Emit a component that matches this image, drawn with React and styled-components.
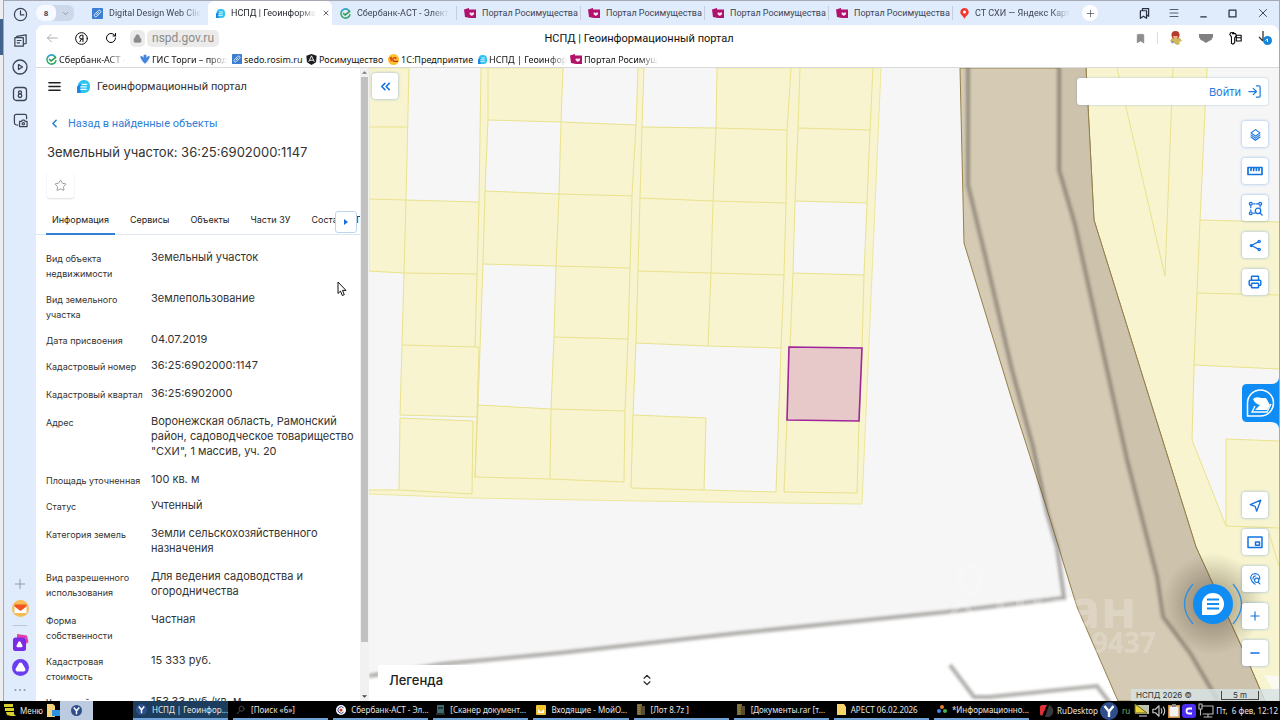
import React from "react";
import styled, { createGlobalStyle } from "styled-components";
import {
  Bookmark,
  ChevronDown,
  ChevronLeft,
  ChevronsLeft,
  ChevronsUpDown,
  Lock,
  LogIn,
  Menu,
  Minus,
  Plus,
  Printer,
  RotateCw,
  Star,
  X,
} from "lucide-react";

const GlobalStyle = createGlobalStyle`
  * {
    box-sizing: border-box;
  }
  body {
    margin: 0;
    overflow: hidden;
    font-family: Roboto, sans-serif;
  }
  button {
    border: none;
    background: none;
    padding: 0;
    margin: 0;
    font: inherit;
    color: inherit;
    cursor: pointer;
  }
  a {
    color: inherit;
    text-decoration: none;
  }
  svg {
    display: block;
    flex: none;
  }
`;

/* ---------- window ---------- */

const Desktop = styled.div`
  display: grid;
  grid-template-columns: minmax(0, 1fr);
  grid-template-rows: minmax(0, 1fr) 19px;
  height: 100vh;
  background: linear-gradient(#eceef0 19px, #44638c 19px, #44638c 55px, #eceef0 55px);
`;

const BrowserWindow = styled.div`
  display: grid;
  grid-template-columns: 32px minmax(0, 1fr);
  margin-left: 3px;
  border: 1px solid #a4a9b3;
  border-bottom: none;
  background: #e0ebfc;
  min-height: 0;
`;

const SideRail = styled.nav`
  display: flex;
  flex-direction: column;
  justify-content: space-between;
  align-items: center;
  padding: 6px 0 5px;
  color: #3b4354;
`;

const RailGroup = styled.div`
  display: flex;
  flex-direction: column;
  align-items: center;
  gap: ${(props) => props.$gap}px;
`;

const RailDivider = styled.div`
  width: 14px;
  height: 1px;
  background: #bcc5d5;
`;

const RailDots = styled.div`
  color: #8c95a5;
`;

const Page = styled.div`
  display: flex;
  flex-direction: column;
  min-width: 0;
  min-height: 0;
`;

/* ---------- tab strip ---------- */

const TabStrip = styled.div`
  display: flex;
  align-items: center;
  height: 24px;
  color: #3d4557;
  font-size: 9px;
`;

const TabGroup = styled.div`
  display: flex;
  align-items: center;
  width: 38px;
  height: 16px;
  margin: 0 10px 0 0;
  border-radius: 6px;
  background: #cdd8ea;
  overflow: hidden;
`;

const TabCount = styled.button`
  width: 20px;
  height: 16px;
  border-radius: 6px;
  background: #f6f9ff;
  font-size: 8px;
  font-weight: 700;
`;

const TabGroupToggle = styled.button`
  display: flex;
  justify-content: center;
  width: 18px;
  color: #7d889c;
`;

const Tab = styled.button`
  display: flex;
  align-items: center;
  gap: 6px;
  flex: 0 1 124px;
  min-width: 0;
  height: ${(props) => (props.$active ? "24px" : "14px")};
  padding: 0 ${(props) => (props.$active ? "7px" : "1px")} 0 7px;
  border-radius: ${(props) => (props.$active ? "6px 6px 0 0" : "0")};
  border-left: 1px solid ${(props) => (props.$divider ? "#c3cede" : "transparent")};
  background: ${(props) => (props.$active ? "#fff" : "transparent")};
  color: ${(props) => (props.$active ? "#1c1f26" : "#3d4557")};

  svg:nth-of-type(2) {
    margin-left: auto;
  }
`;

const FadeText = styled.span`
  white-space: nowrap;
  mask-image: ${(props) =>
    props.$fade ? "linear-gradient(to right, #000 calc(100% - 18px), transparent)" : "none"};
`;

const NewTab = styled.button`
  display: flex;
  align-items: center;
  justify-content: center;
  width: 16px;
  height: 16px;
  margin-left: 6px;
  border-radius: 50%;
  background: #fff;
`;

const WindowButtons = styled.div`
  display: flex;
  align-items: center;
  gap: 18px;
  margin-left: auto;
  padding-right: 9px;
  color: #2a3040;
`;

/* ---------- toolbar ---------- */

const Toolbar = styled.div`
  display: grid;
  grid-template-columns: minmax(0, 1fr) auto minmax(0, 1fr);
  align-items: center;
  height: 26px;
  padding: 0 7px 0 10px;
  background: #fff;
  border-radius: 8px 8px 0 0;
`;

const ToolbarSide = styled.div`
  display: flex;
  align-items: center;
  gap: ${(props) => props.$gap}px;
  justify-content: ${(props) => (props.$end ? "flex-end" : "flex-start")};
`;

const Address = styled.div`
  display: flex;
  align-items: center;
  gap: 2px;
  margin-left: -4px;
  color: #8a8a8a;
  font-size: 12px;
`;

const AddressPart = styled.button`
  display: flex;
  align-items: center;
  height: 17px;
  padding: 0 ${(props) => props.$pad}px;
  border-radius: 5px;
  background: #ebebeb;
`;

const PageTitle = styled.div`
  padding-right: 40px;
  font-size: 11px;
  color: #111;
  white-space: nowrap;
`;

const ToolbarDivider = styled.div`
  width: 1px;
  height: 12px;
  background: #ddd;
`;

const Bookmarks = styled.div`
  display: flex;
  gap: 9px;
  align-items: center;
  height: 17px;
  padding: 0 10px;
  border-bottom: 1px solid #d9d9d9;
  background: #fff;
  color: #111;
  font-family: "Noto Sans", sans-serif;
  font-size: 9px;
`;

const BookmarkLink = styled.a`
  display: flex;
  align-items: center;
  gap: 2px;
  width: ${(props) => props.$width}px;
`;

/* ---------- site ---------- */

const Site = styled.main`
  display: grid;
  grid-template-columns: 333px minmax(0, 1fr);
  flex: 1;
  min-height: 0;
`;

const PanelFrame = styled.div`
  display: grid;
  grid-template-columns: minmax(0, 1fr) 9px;
  min-height: 0;
  background: #fff;
`;

const Panel = styled.section`
  min-height: 0;
  overflow: hidden;
  background: #fff;
  color: #333;
  font-family: Inter, sans-serif;
`;

const ScrollTrack = styled.div`
  display: flex;
  flex-direction: column;
  align-items: center;
  justify-content: space-between;
  padding: 3px 0;
  background: #f1f1f1;
`;

const ScrollThumb = styled.div`
  width: 7px;
  flex: 0 1 565px;
  margin: 3px 0 auto;
  background: #c1c1c1;
`;

const SiteHeader = styled.header`
  display: flex;
  align-items: center;
  height: 37px;
  padding-left: 11px;
  font-family: Roboto, sans-serif;
  font-size: 11px;
`;

const BurgerButton = styled.button`
  margin-right: 15px;
  color: #222;
`;

const SiteName = styled.a`
  display: flex;
  align-items: center;
  gap: 7px;
`;

const BackLink = styled.a`
  display: flex;
  align-items: center;
  gap: 7px;
  height: 37px;
  padding-left: 12px;
  color: #2f80d8;
  font-family: Roboto, sans-serif;
  font-size: 11px;
`;

const ObjectTitle = styled.h1`
  margin: 0;
  padding-left: 11px;
  font-size: 13px;
  line-height: 20px;
  font-weight: 400;
`;

const StarButton = styled.button`
  display: flex;
  align-items: center;
  justify-content: center;
  width: 27px;
  height: 26px;
  margin: 10px 0 9px 11px;
  border-radius: 3px;
  box-shadow: 0 1px 2px rgba(0, 0, 0, 0.14);
  color: #999;
`;

const SectionTabs = styled.div`
  display: flex;
  align-items: center;
  position: relative;
  height: 28px;
  padding-left: 10px;
  border-bottom: 1px solid #dde5ee;
  font-size: 9px;
`;

const SectionTab = styled.button`
  flex: none;
  height: 28px;
  margin-right: 9px;
  padding: 0 6px;
  border-bottom: 2px solid ${(props) => (props.$active ? "#2f80d8" : "transparent")};
  color: #222;
`;

const TabsScroll = styled.button`
  position: absolute;
  right: 3px;
  top: 4px;
  display: flex;
  align-items: center;
  justify-content: center;
  width: 22px;
  height: 22px;
  border: 1px solid #bcd6f2;
  border-radius: 3px;
  background: #fff;
`;

const Details = styled.dl`
  margin: 0;
  padding: 15px 6px 0 10px;
`;

const DetailRow = styled.div`
  display: grid;
  grid-template-columns: 105px minmax(0, 1fr);
  padding-bottom: ${(props) => (props.$tight ? "11px" : "13px")};
`;

const DetailLabel = styled.dt`
  margin-bottom: -3px;
  padding-top: 1px;
  max-width: 98px;
  font-size: 9px;
  line-height: 15px;
`;

const DetailValue = styled.dd`
  margin: 0;
  font-size: 11px;
  line-height: 15px;
`;

/* ---------- map ---------- */

const MapArea = styled.section`
  position: relative;
  min-height: 0;
  overflow: hidden;
  background: #f6f6f6;
  font-family: Inter, sans-serif;
`;

const MapCanvas = styled.svg`
  width: 100%;
  height: 100%;
`;

const MapButton = styled.button`
  display: flex;
  align-items: center;
  justify-content: center;
  width: 26px;
  height: 26px;
  border-radius: 3px;
  background: #fff;
  box-shadow: 0 0 3px rgba(47, 128, 216, 0.55);
  color: #1473e0;
`;

const CollapseSlot = styled.div`
  position: absolute;
  left: 3px;
  top: 5px;
`;

const LoginBar = styled.div`
  position: absolute;
  right: 11px;
  top: 10px;
  display: flex;
  justify-content: flex-end;
  width: 191px;
  height: 27px;
  padding-right: 6px;
  border-radius: 3px;
  background: #fff;
  box-shadow: 0 0 2px rgba(47, 128, 216, 0.5);
  color: #1f7ce0;
  font-size: 11px;
`;

const LoginButton = styled.button`
  display: flex;
  align-items: center;
  gap: 6px;
`;

const MapTools = styled.div`
  position: absolute;
  right: 11px;
  ${(props) => (props.$bottom ? "bottom: 35px;" : "top: 53px;")}
  display: grid;
  gap: 11px;
`;

const AssistWidget = styled.button`
  position: absolute;
  right: 0;
  top: 306px;
`;

const ChatWidget = styled.button`
  position: absolute;
  right: 13px;
  bottom: 44px;
  display: grid;
  place-items: center;
  width: 106px;
  height: 106px;
  border-radius: 50%;
  background: radial-gradient(circle, rgba(90, 80, 60, 0.38) 25%, transparent 68%);
`;

const Legend = styled.button`
  position: absolute;
  left: 9px;
  bottom: 6px;
  display: flex;
  align-items: center;
  justify-content: space-between;
  width: 288px;
  height: 30px;
  padding: 0 12px 0 11px;
  background: #fff;
  color: #222;
  font-size: 13px;
  font-weight: 500;
`;

const Attribution = styled.div`
  position: absolute;
  right: 0;
  bottom: 0;
  display: flex;
  justify-content: space-between;
  align-items: center;
  width: 148px;
  height: 12px;
  padding: 0 20px 0 5px;
  background: rgba(214, 226, 230, 0.8);
  color: #333;
  font-size: 8px;
`;

const ScaleBar = styled.div`
  width: 38px;
  height: 9px;
  border: 1px solid #444;
  border-top: none;
  line-height: 8px;
  text-align: center;
`;

const Pointer = styled.svg`
  position: absolute;
  left: 337px;
  top: 281px;
`;

/* ---------- taskbar ---------- */

const Taskbar = styled.footer`
  display: flex;
  align-items: stretch;
  min-width: 0;
  background: #000;
  color: #e6e6e6;
  font-family: "Noto Sans", sans-serif;
  font-size: 8px;
`;

const StartButton = styled.button`
  display: flex;
  align-items: center;
  gap: 4px;
  width: 46px;
  padding-left: 3px;
`;

const Launcher = styled.button`
  display: flex;
  align-items: center;
  justify-content: center;
  width: ${(props) => props.$width}px;
  background: ${(props) => (props.$lit ? "#bccbe0" : "transparent")};
`;

const TaskList = styled.div`
  display: flex;
  flex: 0 1 896px;
  min-width: 0;
  gap: 5px;
  margin-left: 40px;
`;

const Task = styled.button`
  display: flex;
  align-items: center;
  gap: 5px;
  flex: 1 1 0;
  min-width: 0;
  padding: 0 2px 0 3px;
  border-bottom: 2px solid #6fa3d8;
  background: ${(props) => (props.$active ? "#1c3d5c" : "transparent")};
`;

const TaskName = styled.span`
  white-space: nowrap;
`;

const Tray = styled.div`
  display: flex;
  align-items: center;
  gap: 2px;
  margin-left: auto;
  padding-right: 2px;
  white-space: nowrap;
`;

const InputLang = styled.span`
  margin: 0 2px;
  color: #6fae6f;
`;

/* ---------- small drawings ---------- */

const SberIcon = ({ size = 11 }) => (
  <svg width={size} height={size} viewBox="0 0 12 12" fill="none" strokeWidth="1.7">
    <path d="M10.6 4A5 5 0 1 0 11 6.6" stroke="#35ab6b" />
    <path d="M1.6 3.8A5 5 0 0 1 9.2 2.2" stroke="#3ba7dd" />
    <path d="M3.4 5.6 5.6 7.6 11 3.4" stroke="#2b9c52" />
  </svg>
);

const DocIcon = ({ size = 11 }) => (
  <svg width={size} height={size} viewBox="0 0 12 12">
    <rect width="12" height="12" rx="1" fill="#3c7fd2" />
    <g transform="rotate(45 6 6)" fill="none" stroke="#e8f1ff" strokeWidth="1">
      <rect x="4.4" y="1.6" width="3.2" height="8.8" rx="1.6" />
      <path d="M6 4v4" />
    </g>
  </svg>
);

const NspdIcon = ({ size = 10 }) => (
  <svg width={size} height={size} viewBox="0 0 14 14">
    <path d="M1 14V6a6 6 0 0 1 6-6h1a6 6 0 0 1 6 6v2a6 6 0 0 1-6 6z" fill="#2cc4f0" />
    <path d="M0 14V7l4-3v10z" fill="#1e86e5" />
    <path d="M5 4.6h6M3.5 7.4h7M3.5 10.2h7" stroke="#e4fbff" strokeWidth="1.3" />
  </svg>
);

const PortalIcon = () => (
  <svg width="12" height="11" viewBox="0 0 12 11">
    <path d="M0 1.4 5 0v1.4h7V10H6L1 9z" fill="#b0126c" />
    <path d="M5.6 4.6h1.6l.6.6.6-.6H10v1.6L7.8 8 5.6 6.2z" fill="#fff" opacity=".9" />
  </svg>
);

const PinIcon = () => (
  <svg width="9" height="11" viewBox="0 0 9 11">
    <path d="M4.5 0A4.2 4.2 0 0 1 8.7 4.2C8.7 7 5.4 7.6 4.5 11 3.6 7.6.3 7 .3 4.2A4.2 4.2 0 0 1 4.5 0z" fill="#f0392f" />
    <circle cx="4.5" cy="4.1" r="1.5" fill="#fff" />
  </svg>
);

const EagleIcon = () => (
  <svg width="10" height="10" viewBox="0 0 12 12" fill="#4385dd">
    <path d="M6 12 4.5 10H3L3.6 8 1.8 8 2.4 6.5 1 6 .4 2 3 3 4.4 4.4 4.2 1.4 6 .6 7.8 1.4 7.6 4.4 9 3 11.6 2 11 6 9.6 6.5 10.2 8H8.4L9 10H7.5z" />
  </svg>
);

const ShieldIcon = () => (
  <svg width="11" height="11" viewBox="0 0 12 12">
    <path d="M6 0 11.6 2 11 9 6 12 1 9 .4 2z" fill="#1c1c20" />
    <path d="M3 8.4 6 2l3 6.4M4.2 6.8h3.6" fill="none" stroke="#fff" strokeWidth="1" />
  </svg>
);

const OneCIcon = () => (
  <svg width="11" height="11" viewBox="0 0 12 12">
    <circle cx="6" cy="6" r="6" fill="#fbc02c" />
    <path d="M2 5 3.4 4v4M9 5.2A2 2 0 1 0 7.4 8H11" fill="none" stroke="#d8261c" strokeWidth="1.3" />
  </svg>
);

const YandexMark = ({ size }) => (
  <svg width={size} height={size} viewBox="0 0 18 18">
    <circle cx="9" cy="9" r="9" fill="#2f4f8c" />
    <path d="M4.5 4 9 9.5 13.5 4M9 9.5V15" fill="none" stroke="#fff" strokeWidth="2.4" />
  </svg>
);

const Line = ({ size = 14, width = 1.3, children }) => (
  <svg
    width={size}
    height={size}
    viewBox="0 0 16 16"
    fill="none"
    stroke="currentColor"
    strokeWidth={width}
    strokeLinecap="round"
    strokeLinejoin="round"
  >
    {children}
  </svg>
);

/* ---------- data ---------- */

const browserTabs = [
  { icon: <DocIcon />, name: "Digital Design Web Clie", fade: true },
  { icon: <NspdIcon size={9} />, name: "НСПД | Геоинформа", fade: true, active: true },
  { icon: <SberIcon />, name: "Сбербанк-АСТ - Элект", fade: true },
  { icon: <PortalIcon />, name: "Портал Росимущества", divider: true },
  { icon: <PortalIcon />, name: "Портал Росимущества", divider: true },
  { icon: <PortalIcon />, name: "Портал Росимущества", divider: true },
  { icon: <PortalIcon />, name: "Портал Росимущества", divider: true },
  { icon: <PinIcon />, name: "СТ СХИ — Яндекс Карт", fade: true, divider: true },
];

const bookmarks = [
  { icon: <SberIcon />, name: "Сбербанк-АСТ - ", width: 85, fade: true },
  { icon: <EagleIcon />, name: "ГИС Торги – прод", width: 83, fade: true },
  { icon: <DocIcon size={10} />, name: "sedo.rosim.ru", width: 65 },
  { icon: <ShieldIcon />, name: "Росимущество", width: 73 },
  { icon: <OneCIcon />, name: "1С:Предприятие", width: 81 },
  { icon: <NspdIcon size={9} />, name: "НСПД | Геоинфор", width: 83, fade: true },
  { icon: <PortalIcon />, name: "Портал Росимущ", width: 86, fade: true },
];

const details = [
  ["Вид объекта недвижимости", "Земельный участок"],
  ["Вид земельного участка", "Землепользование"],
  ["Дата присвоения", "04.07.2019", true],
  ["Кадастровый номер", "36:25:6902000:1147"],
  ["Кадастровый квартал", "36:25:6902000"],
  ["Адрес", 'Воронежская область, Рамонский район, садоводческое товарищество "СХИ", 1 массив, уч. 20'],
  ["Площадь уточненная", "100 кв. м", true],
  ["Статус", "Учтенный"],
  ["Категория земель", "Земли сельскохозяйственного назначения"],
  ["Вид разрешенного использования", "Для ведения садоводства и огородничества"],
  ["Форма собственности", "Частная"],
  ["Кадастровая стоимость", "15 333 руб."],
  ["Удельный показатель", "153.33 руб./кв. м"],
];

const sections = ["Информация", "Сервисы", "Объекты", "Части ЗУ", "Состав ЕЗП"];

const tasks = [
  { icon: <YandexMark size={11} />, name: "НСПД | Геоинфор...", active: true },
  {
    icon: <Line size={10}><circle cx="9" cy="6" r="4" stroke="#555" /><path d="M6 9 2 14" stroke="#555" /></Line>,
    name: "[Поиск «6»]",
  },
  {
    icon: (
      <svg width="10" height="10" viewBox="0 0 10 10">
        <circle cx="5" cy="5" r="5" fill="#fff" />
        <path d="M7.6 3A3.2 3.2 0 1 0 7.600 7" fill="none" stroke="#38478c" />
        <circle cx="5" cy="5" r="1.6" fill="#d83a3a" />
      </svg>
    ),
    name: "Сбербанк-АСТ - Эл...",
  },
  {
    icon: (
      <svg width="9" height="10" viewBox="0 0 9 10">
        <path d="M1 0h7v8H1z" fill="#3d6b70" />
        <path d="M2 2h5v2H2z" fill="#22383e" />
        <path d="M0 9h9" stroke="#5a5a5a" />
      </svg>
    ),
    name: "[Сканер документ...",
  },
  {
    icon: (
      <svg width="10" height="10" viewBox="0 0 10 10">
        <rect width="10" height="10" rx="1" fill="#f4c531" />
        <path d="M2 4l3 3 3-3v4H2z" fill="#fff" />
      </svg>
    ),
    name: "Входящие - МойО...",
  },
  { icon: <ArchiveIcon />, name: "[Лот 8.7z ]" },
  { icon: <ArchiveIcon />, name: "[Документы.rar [т..." },
  {
    icon: (
      <svg width="9" height="11" viewBox="0 0 9 11">
        <path d="M0 0h7l2 3v8H0z" fill="#f8d568" />
      </svg>
    ),
    name: "АРЕСТ 06.02.2026",
  },
  {
    icon: (
      <svg width="10" height="9" viewBox="0 0 10 9">
        <circle cx="5" cy="2" r="2" fill="#e87a2c" />
        <circle cx="2" cy="6" r="2" fill="#3f8ae0" />
        <circle cx="8" cy="6" r="2" fill="#49b04f" />
      </svg>
    ),
    name: "*Информационно...",
  },
];

function ArchiveIcon() {
  return (
    <svg width="9" height="11" viewBox="0 0 9 11">
      <path d="M0 0h5v11H0z" fill="#7a6a38" />
      <path d="M4 2h4v9H4z" fill="#574d30" />
      <path d="M2 1v9" stroke="#a8935a" strokeDasharray="1 1" />
    </svg>
  );
}

// every free plot is a gap cut out of the yellow allotment
const gaps = [
  "409,68 481,68 479,202 406,200",
  "369,272 404,273 402,345 400,415 400,419 399,490 369,489",
  "400,415 477,417 475,421 400,418",
  "563,68 638,68 636,125 561,122",
  "488,120 561,122 559,194 485,191",
  "483,264 556,266 551,409 478,405",
  "644,68 717,68 716,128 642,127",
  "636,343 781,348 776,492 704,490 706,418 633,415",
  "795,201 867,203 864,275 793,273",
  "1207,68 1279,68 1279,222 1200,220",
  "1195,365 1279,369 1279,441 1226,439 1226,526 1192,440",
];

const plotLines = [
  "369,127 407,127",
  "369,199 406,200 479,202",
  "369,271 404,273 477,274",
  "402,345 479,347",
  "409,68 406,200 404,273 402,345 400,415 477,417",
  "481,68 479,202 477,274 475,347",
  "479,347 477,417 475,478",
  "400,418 473,421 472,494 399,490 400,418",
  "369,490 399,490",
  "488,68 488,120 485,191 483,264 478,405 475,477 550,479 624,482",
  "563,68 561,122 559,194 556,266 554,337 551,409 550,479",
  "638,68 636,125 632,196 630,268 628,339 625,411 624,482",
  "488,120 561,122 636,125",
  "485,191 559,194 632,196",
  "483,264 556,266 630,268",
  "554,337 628,339",
  "478,405 551,409 625,411",
  "644,68 642,127 640,198 638,271 636,343 633,415 631,488 704,490 776,492",
  "717,68 716,128 713,201 711,273 708,346",
  "791,68 787,130 786,203 784,275 781,348 776,492",
  "642,127 716,128 787,130",
  "640,198 713,201 786,203",
  "638,271 711,273 784,275",
  "636,343 708,346 781,348",
  "633,415 706,418 704,490",
  "800,68 798,128 795,201 793,273 790,347 787,420 784,492 857,493",
  "873,68 870,130 867,203 864,275 862,348 859,421 857,493",
  "798,128 870,130",
  "795,201 867,203",
  "793,273 864,275",
  "1117,68 1165,276 1173,68",
  "1207,68 1200,220 1197,293 1194,365 1192,440 1226,526",
  "1200,220 1279,222",
  "1197,293 1279,295",
  "1194,365 1279,369",
  "1226,439 1279,441",
  "1226,439 1226,526 1279,528",
  "1269,533 1279,566",
];

const CadastralMap = () => (
  <MapCanvas viewBox="369 68 910 633" preserveAspectRatio="xMinYMin slice" role="img" aria-label="Карта">
    <defs>
      <filter id="soft" x="-5%" y="-5%" width="110%" height="110%">
        <feGaussianBlur stdDeviation="1.8" />
      </filter>
    </defs>
    <path d="M369 675 443 663 560 653 740 633 947 612 1063 598 1140 590V701H369z" fill="#fff" />
    <g fill="#f8f4d0">
      <path d="M369 68H881L862 504 640 501 472 498 369 494z" stroke="#ede79b" />
      <path d="M1086 68H1279V701H1265L1196 547 1150 400 1094 220z" />
    </g>
    <g fill="#f6f6f6">
      {gaps.map((points) => (
        <polygon key={points} points={points} />
      ))}
    </g>
    <path d="M1264 675 1279 701V676z" fill="#fbfaf0" />
    <g fill="none" stroke="#e9e28c" strokeWidth="1">
      {plotLines.map((points) => (
        <polyline key={points} points={points} />
      ))}
    </g>
    <path
      d="M960 68 964 243 1012 400 1045 503 1077 607 1118 701H1265L1244 652 1196 547 1150 400 1094 220 1086 68z"
      fill="#d5cab4"
      stroke="#94804a"
    />
    <path
      d="M1059 68V170L1075 225 1107 370 1127 460 1157 577 1163 617 1190 653 1217 701H1265L1196 547 1150 400 1094 220 1086 68z"
      fill="#cdc2ac"
    />
    <path d="M1086 68 1094 220 1150 400 1196 547 1244 652 1265 701" fill="none" stroke="#94804a" />
    <g fill="none" stroke="#4a443c" strokeWidth="4" opacity=".44" filter="url(#soft)">
      <path d="M968 60V185L985 255 1012 370 1033 447 1047 513 1057 547 1064 598 947 612 740 633 560 653 443 664 369 676" />
      <path d="M1059 60V170L1075 225 1107 370 1127 460 1157 577 1163 617 1190 653 1218 701" />
      <path d="M950 665 974 697 990 697 1097 686 1110 703" />
    </g>
    <polygon points="789,347 862,348 859,421 787,420" fill="#e6c9c8" stroke="#a0259b" strokeWidth="1.6" />
    <g fill="#fff" opacity=".2" fontFamily="Open Sans, sans-serif" fontWeight="700">
      <text x="992" y="628" fontSize="54">циан</text>
      <text x="1092" y="653" fontSize="28">9437</text>
      <path
        d="M970 566a11 11 0 0 1 11 11c0 9-11 18-11 18s-11-9-11-18a11 11 0 0 1 11-11z M962 600 980 625M962 600 945 625"
        stroke="#fff"
        strokeWidth="5"
        fill="none"
      />
    </g>
  </MapCanvas>
);

const BrowserHead = () => (
  <>
    <TabStrip>
      <TabGroup>
        <TabCount>8</TabCount>
        <TabGroupToggle aria-label="Группы вкладок">
          <ChevronDown size={9} />
        </TabGroupToggle>
      </TabGroup>
      {browserTabs.map((tab, index) => (
        <Tab key={index} $active={tab.active} $divider={tab.divider}>
          {tab.icon}
          <FadeText $fade={tab.fade}>{tab.name}</FadeText>
          {tab.active && <X size={8} />}
        </Tab>
      ))}
      <NewTab aria-label="Новая вкладка">
        <Plus size={11} strokeWidth={1.5} />
      </NewTab>
      <WindowButtons>
        <button aria-label="Коллекции">
          <Line size={11} width={1.8}><path d="M5 4V1h9v11l-3-2M2 4h9v11l-4.5-3L2 15z" /></Line>
        </button>
        <button aria-label="Меню браузера">
          <Menu size={12} strokeWidth={1.5} />
        </button>
        <button aria-label="Свернуть">
          <Line size={11} width={1.8}><path d="M4 13h8" /></Line>
        </button>
        <button aria-label="Развернуть">
          <Line size={11} width={1.8}><path d="M3 3h10v10H3z" /></Line>
        </button>
        <button aria-label="Закрыть">
          <X size={14} strokeWidth={1.5} />
        </button>
      </WindowButtons>
    </TabStrip>
    <Toolbar>
      <ToolbarSide $gap={17}>
        <button aria-label="Назад">
          <Line size={12}><path d="M15 8H2M7 3 2 8l5 5" stroke="#aaa" /></Line>
        </button>
        <button aria-label="Яндекс">
          <Line size={13} width={1.2}>
            <circle cx="8" cy="8" r="7.2" />
            <path d="M9.8 12V4H8a2.2 2.2 0 0 0 0 4.6h1.8M8 8.6 6 12" />
          </Line>
        </button>
        <button aria-label="Обновить">
          <RotateCw size={12} strokeWidth={2} />
        </button>
        <Address>
          <AddressPart $pad={3} aria-label="Защищённое соединение">
            <Lock size={9} fill="#8a8a8a" />
          </AddressPart>
          <AddressPart $pad={5}>nspd.gov.ru</AddressPart>
        </Address>
      </ToolbarSide>
      <PageTitle>НСПД | Геоинформационный портал</PageTitle>
      <ToolbarSide $gap={11} $end>
        <button aria-label="В закладки">
          <Bookmark size={11} fill="#8c8c8c" color="#8c8c8c" />
        </button>
        <ToolbarDivider />
        <ToolbarSide $gap={16}>
          <button aria-label="Расширение">
            <svg width="14" height="14" viewBox="0 0 14 14">
              <path d="M3 11 1 10l2-3h8l2 3-3 1 1 2-3 1z" fill="#cdb85a" />
              <path d="M3 13 2 10h3z" fill="#8c88b8" />
              <circle cx="6.5" cy="4" r="4" fill="#b6392b" />
              <path d="M4 5h5l-1 3H5z" fill="#e5b28c" />
            </svg>
          </button>
          <button aria-label="Карман">
            <svg width="14" height="9" viewBox="0 0 14 9">
              <path d="M0 0h14v3a6 6 0 0 1-4 4L7 9 4 7A6 6 0 0 1 0 3z" fill="#808080" />
            </svg>
          </button>
          <button aria-label="Пароли">
            <Line size={13} width={1.3}>
              <path d="M1 3a3 3 0 0 1 5-2M1 3l2 3v8l2 1 2-2V7l2-3-1-2H4M9 4h6v7H9zM9 7h6" />
            </Line>
          </button>
          <button aria-label="Загрузки">
            <svg width="14" height="14" viewBox="0 0 14 14">
              <path d="M5 0v9M1 6l4 4" stroke="#333" strokeWidth="1.3" fill="none" />
              <circle cx="9.5" cy="9.5" r="4.5" fill="#1585dc" />
              <path d="M7.5 9.5 9.5 8v3" stroke="#fff" fill="none" />
            </svg>
          </button>
        </ToolbarSide>
      </ToolbarSide>
    </Toolbar>
    <Bookmarks>
      {bookmarks.map((item) => (
        <BookmarkLink key={item.name} href="#" $width={item.width}>
          {item.icon}
          <FadeText $fade={item.fade}>{item.name}</FadeText>
        </BookmarkLink>
      ))}
    </Bookmarks>
  </>
);

const Rail = () => (
  <SideRail>
    <RailGroup $gap={11}>
      <button aria-label="История">
        <Line size={15}><circle cx="8" cy="8" r="6.5" /><path d="M8 4v4.5h3.5" /></Line>
      </button>
      <button aria-label="Вкладки">
        <Line size={15}><path d="M2 5h9v9H2zM4 5V3.5L14 2v9l-3 1M4.5 8h4M4.5 10.5h2.5" /></Line>
      </button>
      <button aria-label="Видео">
        <Line size={16}><circle cx="8" cy="8" r="7" /><path d="M6.5 5.5v5l4-2.5z" /></Line>
      </button>
      <button aria-label="Табло">
        <Line size={16}>
          <rect x="1.5" y="1.5" width="13" height="13" rx="3" />
          <circle cx="8" cy="6.3" r="1.5" />
          <circle cx="8" cy="9.7" r="1.8" />
        </Line>
      </button>
      <button aria-label="Скриншот">
        <Line size={15}>
          <path d="M5 13 3 12.5Q1.5 12 1.5 10V3.5Q1.5 1.5 3.5 1.5h9q2 0 2 2V6M7 9h2l1-1.5h2l1 1.5h2v5.5H7z" />
          <circle cx="11" cy="11.5" r="1.3" />
        </Line>
      </button>
    </RailGroup>
    <RailGroup $gap={8}>
      <button aria-label="Добавить"><Plus size={16} strokeWidth={1.4} color="#8d97a8" /></button>
      <button aria-label="Почта">
        <svg width="17" height="17" viewBox="0 0 17 17">
          <circle cx="8.5" cy="8.5" r="8.5" fill="#f7bd55" />
          <path d="M2.5 5h12v8h-12z" fill="#fff" />
          <path d="M2.5 4.5h12v2L8.5 11l-6-4.5z" fill="#f0561d" />
        </svg>
      </button>
      <RailDivider />
      <button aria-label="Умная камера">
        <svg width="17" height="17" viewBox="0 0 17 17">
          <path d="M5 0 15 1.5 16.5 8 14 10V4H5z" fill="#e23fa8" />
          <rect x="1" y="3.5" width="13" height="13.5" rx="2.5" fill="#7a2be8" />
          <path d="M7.5 8.5 9.3 12H5.7z" fill="#fff" stroke="#fff" strokeWidth="2.5" strokeLinejoin="round" />
        </svg>
      </button>
      <button aria-label="Алиса">
        <svg width="17" height="17" viewBox="0 0 17 17">
          <circle cx="8.5" cy="8.5" r="8.5" fill="#6a3df0" />
          <path d="M8.5 5.5 11.5 10.5H5.5z" fill="#fff" stroke="#fff" strokeWidth="4" strokeLinejoin="round" />
        </svg>
      </button>
      <RailDots>
        <Line size={12} width={2.5}><path d="M2 8h.1M8 8h.1M14 8h.1" /></Line>
      </RailDots>
    </RailGroup>
  </SideRail>
);

const InfoPanel = () => (
  <PanelFrame>
    <Panel>
      <SiteHeader>
        <BurgerButton aria-label="Меню">
          <Line size={15} width={1.5}><path d="M2 4h12M2 8h12M2 12h12" /></Line>
        </BurgerButton>
        <SiteName href="#">
          <NspdIcon size={13} />
          Геоинформационный портал
        </SiteName>
      </SiteHeader>
      <BackLink href="#">
        <ChevronLeft size={13} strokeWidth={3} />
        Назад в найденные объекты
      </BackLink>
      <ObjectTitle>Земельный участок: 36:25:6902000:1147</ObjectTitle>
      <StarButton aria-label="В избранное">
        <Star size={13} strokeWidth={1.8} />
      </StarButton>
      <SectionTabs>
        {sections.map((name, index) => (
          <SectionTab key={name} $active={index === 0}>
            {name}
          </SectionTab>
        ))}
        <TabsScroll aria-label="Ещё">
          <svg width="4" height="6" viewBox="0 0 4 6">
            <path d="M0 0 4 3 0 6z" fill="#1473e0" />
          </svg>
        </TabsScroll>
      </SectionTabs>
      <Details>
        {details.map(([label, value, tight]) => (
          <DetailRow key={label} $tight={tight}>
            <DetailLabel>{label}</DetailLabel>
            <DetailValue>{value}</DetailValue>
          </DetailRow>
        ))}
      </Details>
    </Panel>
    <ScrollTrack>
      <svg width="5" height="3" viewBox="0 0 6 3"><path d="M0 3 3 0l3 3z" fill="#777" /></svg>
      <ScrollThumb />
      <svg width="5" height="3" viewBox="0 0 6 3"><path d="M0 0 3 3l3-3z" fill="#444" /></svg>
    </ScrollTrack>
  </PanelFrame>
);

const MapPanel = () => (
  <MapArea>
    <CadastralMap />
    <CollapseSlot>
      <MapButton aria-label="Свернуть панель"><ChevronsLeft size={15} strokeWidth={2.5} /></MapButton>
    </CollapseSlot>
    <LoginBar>
      <LoginButton>
        Войти
        <LogIn size={15} />
      </LoginButton>
    </LoginBar>
    <MapTools>
      <MapButton aria-label="Слои">
        <Line size={13} width={1.4}><path d="M8 2l5.500 4L8 10 2.500 6zM2.500 8.500 8 12.500l5.500-4M2.500 11 8 15l5.500-4" /></Line>
      </MapButton>
      <MapButton aria-label="Линейка">
        <Line size={16} width={1.7}><path d="M1 4.5h14v7H1zM4 5v2.5M6.7 5v2.5M9.4 5v2.5M12 5v2.5" /></Line>
      </MapButton>
      <MapButton aria-label="Поиск по области">
        <Line size={15} width={1.4}>
          <circle cx="3" cy="3" r="1.5" />
          <circle cx="13" cy="3" r="1.5" />
          <circle cx="3" cy="13" r="1.5" />
          <path d="M6 3h1.5M9 3h1.5M3 6v1M3 9.5v1M13 6v.5M6 13h1.5M12.8 12.8 15 15" />
          <circle cx="10.7" cy="10.5" r="2.9" />
        </Line>
      </MapButton>
      <MapButton aria-label="Поделиться">
        <Line size={13} width={1.6}>
          <path d="M11.5 3.5 3 8l8.5 4.5" />
          <circle cx="12.5" cy="3" r="1.4" />
          <circle cx="2.8" cy="8" r="1.2" />
          <circle cx="12.5" cy="13" r="1.4" />
        </Line>
      </MapButton>
      <MapButton aria-label="Печать"><Printer size={14} strokeWidth={2.5} /></MapButton>
    </MapTools>
    <AssistWidget aria-label="Помощник">
      <svg width="38" height="58" viewBox="0 0 38 58">
        <path d="M38 4v50q-1-6-8-6H6q-5 0-5-5V15q0-5 5-5h24q7 0 8-6z" fill="#0f8df5" />
        <path d="M6.5 42V29a13 13 0 1 1 13 13z" fill="none" stroke="#fff" strokeWidth="1.5" />
        <path d="M12 25q3-3 8-1h5l4 7-3 5H14l5-5q-5-1-7-6z" fill="#fff" />
        <path d="M14 32l-3 6h15l4-8" fill="none" stroke="#fff" strokeWidth="1.3" />
      </svg>
    </AssistWidget>
    <ChatWidget aria-label="Чат">
      <svg width="66" height="66" viewBox="0 0 66 66">
        <path d="M13 13Q-4 33 13 53M53 13Q70 33 53 53" fill="none" stroke="#2f8fe0" strokeWidth="1.3" />
        <circle cx="33" cy="33" r="20" fill="#0f8df5" />
        <path d="M22 44V33a11 11 0 1 1 11 11z" fill="#fff" />
        <path d="M27 28.5h12M27 33h12M27 37.5h12" stroke="#0f8df5" strokeWidth="2" />
      </svg>
    </ChatWidget>
    <MapTools $bottom>
      <MapButton aria-label="Моё местоположение">
        <Line size={13} width={1.6}><path d="M14.5 1.5 1.5 7l6 2 2 6z" /></Line>
      </MapButton>
      <MapButton aria-label="Обзорная карта">
        <Line size={16} width={1.5}><path d="M1 3h14v10.5H1zM8.5 8h4v3.2h-4z" /></Line>
      </MapButton>
      <MapButton aria-label="Найти точку">
        <Line size={14} width={1.3}>
          <path d="M8 14A11 11 0 0 1 3 7a5.200 5.200 0 0 1 10.400 0v1M13.500 13.500l-1.800-1.800" />
          <circle cx="10" cy="9.5" r="2.5" />
          <path d="M5.800 8V7a2.500 2.500 0 0 1 3-2.400" />
        </Line>
      </MapButton>
      <MapButton aria-label="Приблизить"><Plus size={14} /></MapButton>
      <MapButton aria-label="Отдалить"><Minus size={14} strokeWidth={2.5} /></MapButton>
    </MapTools>
    <Legend>
      Легенда
      <ChevronsUpDown size={14} />
    </Legend>
    <Attribution>
      НСПД 2026 ©<ScaleBar>5 m</ScaleBar>
    </Attribution>
  </MapArea>
);

const SystemBar = () => (
  <Taskbar>
    <StartButton>
      <svg width="13" height="13" viewBox="0 0 13 13">
        <path d="M1 0h9v3H1zM2 4h9v3H2zM3 8h8v2l2 2H8L4 11z" fill="#d9cf2e" />
      </svg>
      Меню
    </StartButton>
    <Launcher $width={14} aria-label="Файлы">
      <svg width="13" height="13" viewBox="0 0 13 13">
        <path d="M0 0h6l2 2v11H0z" fill="#f6d27a" />
        <path d="M5 6h8v6H5z" fill="#2d92e0" />
      </svg>
    </Launcher>
    <Launcher $width={33} $lit aria-label="Яндекс Браузер">
      <YandexMark size={11} />
    </Launcher>
    <TaskList>
      {tasks.map((task) => (
        <Task key={task.name} $active={task.active}>
          {task.icon}
          <TaskName>{task.name}</TaskName>
        </Task>
      ))}
    </TaskList>
    <Tray>
      <svg width="15" height="12" viewBox="0 0 15 12">
        <path d="M7 0A6 6 0 0 0 2 11z" fill="#e02f35" />
        <path d="M9 0 5 12a6 6 0 0 0 4-12z" fill="#3a3a3a" />
      </svg>
      RuDesktop
      <YandexMark size={18} />
      <InputLang>ru</InputLang>
      <svg width="16" height="13" viewBox="0 0 16 13">
        <path d="M1 1h14v9H1z" fill="#bfc4b0" />
        <path d="M1 0v9h12z" fill="#e8d23a" stroke="#6b6320" />
        <path d="M5 12h8" stroke="#ddd" />
      </svg>
      <Line size={14}><path d="M1 6h3l4-4v12l-4-4H1zM10.5 5.5q1.5 2.5 0 5M13 3.5q3 4.5 0 9" stroke="#ccc" /></Line>
      <svg width="12" height="14" viewBox="0 0 12 14">
        <path d="M0 1h12v13H0z" fill="#c98a44" />
        <path d="M1.5 2.5h9v10h-9z" fill="#f3f3f3" />
        <path d="M4 0h4v3H4z" fill="#888" />
      </svg>
      <svg width="14" height="14" viewBox="0 0 14 14">
        <rect width="14" height="14" rx="3" fill="#4b2cf2" />
        <path d="M10 4.5H7A2.5 2.5 0 0 0 7 9.5h3" fill="none" stroke="#fff" strokeWidth="1.8" />
      </svg>
      <Line size={16} width={1.1}><path d="M4 3h11v8H5M10 11v3M6 14h8M1 1h3v5H1zM2.5 6v6" stroke="#bbb" /></Line>
      Пт, &nbsp;6 фев, 12:12
    </Tray>
  </Taskbar>
);

export default function App() {
  return (
    <>
      <GlobalStyle />
      <Desktop>
        <BrowserWindow>
          <Rail />
          <Page>
            <BrowserHead />
            <Site>
              <InfoPanel />
              <MapPanel />
            </Site>
          </Page>
        </BrowserWindow>
        <SystemBar />
      </Desktop>
      <Pointer width="10" height="16" viewBox="0 0 10 16">
        <path d="M1 1v11.5l2.5-2.4 1.8 4.4 2-.8-1.8-4.3H9z" fill="#fff" stroke="#111" />
      </Pointer>
    </>
  );
}
